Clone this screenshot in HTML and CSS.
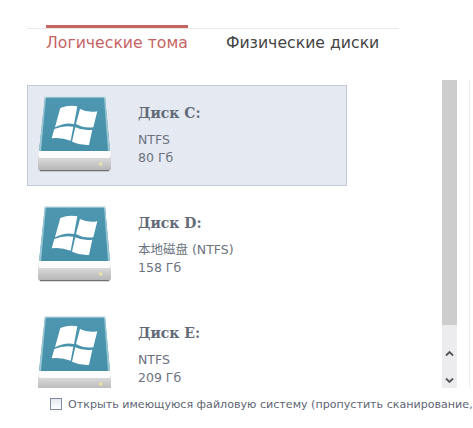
FILE: index.html
```html
<!DOCTYPE html>
<html lang="ru">
<head>
  <meta charset="UTF-8">
  <title>Диски</title>
  <link rel="stylesheet" href="styles.css">
</head>

<body>
  <svg class="defs" width="0" height="0">
    <defs>
      <linearGradient id="body-grad" x1="0" y1="0" x2="0" y2="1">
        <stop offset="0" stop-color="#4f97b1"/>
        <stop offset="1" stop-color="#4690aa"/>
      </linearGradient>
      <linearGradient id="base-grad" x1="0" y1="0" x2="0" y2="1">
        <stop offset="0" stop-color="#ededed"/>
        <stop offset="1" stop-color="#b4b4b4"/>
      </linearGradient>
      <symbol id="drive" viewBox="0 0 73 76">
        <path d="M7 0H67L72 55H1Z" fill="url(#body-grad)"/>
        <path d="M7 0L1 55H3L8 1ZM67 0L72 55H70L66 1Z" fill="#9cc8d6"/>
        <path d="M7 0H67L67.500 1.500H6.800Z" fill="#d5e6ec"/>
        <path d="M22.300 12Q31 8.500 39.300 10.300L36 28Q27 26 17 31.300Z" fill="#fff"/>
        <path d="M42 13Q50 17 59.300 15.300L55.300 31.300Q46 32.500 38 28Z" fill="#fff"/>
        <path d="M16.300 33Q26 29 35.300 30.700L32.700 44.700Q23 41 13.700 42.300Z" fill="#fff"/>
        <path d="M37.300 31.300Q45 35 54.300 33.700L51 49Q42 49.500 34 45.700Z" fill="#fff"/>
        <path d="M1 55H72L73 63V72Q73 75 70 75H3Q0 75 0 72V63Z" fill="url(#base-grad)"/>
        <path d="M1 55H72L72.500 60Q72.500 62 70 62H3Q0.500 62 0.500 60Z" fill="#fcfcfc"/>
        <path d="M2 74.700H71" stroke="#6f6f6f" stroke-width="1.200"/>
        <circle cx="62.700" cy="68" r="1.700" fill="#efe3a0"/>
      </symbol>
    </defs>
  </svg>

  <div class="tabs">
    <div class="tab active">Логические тома</div>
    <div class="tab">Физические диски</div>
  </div>

  <div class="content">
    <div class="disk-list">
      <div class="disk selected">
        <svg class="drive-icon"><use href="#drive"/></svg>
        <div class="disk-info">
          <div class="disk-name">Диск C:</div>
          <div class="disk-meta">NTFS</div>
          <div class="disk-meta">80 Гб</div>
        </div>
      </div>
      <div class="disk">
        <svg class="drive-icon"><use href="#drive"/></svg>
        <div class="disk-info">
          <div class="disk-name">Диск D:</div>
          <div class="disk-meta">本地磁盘 (NTFS)</div>
          <div class="disk-meta">158 Гб</div>
        </div>
      </div>
      <div class="disk">
        <svg class="drive-icon"><use href="#drive"/></svg>
        <div class="disk-info">
          <div class="disk-name">Диск E:</div>
          <div class="disk-meta">NTFS</div>
          <div class="disk-meta">209 Гб</div>
        </div>
      </div>
    </div>

    <div class="scrollbar">
      <div class="thumb"></div>
      <svg class="arrow" width="9" height="7" viewBox="0 0 9 7"><path d="M1 5.500L4.500 2L8 5.500" fill="none" stroke="#555" stroke-width="1.800"/></svg>
      <svg class="arrow" width="9" height="7" viewBox="0 0 9 7"><path d="M1 1.500L4.500 5L8 1.500" fill="none" stroke="#555" stroke-width="1.800"/></svg>
    </div>
    <div class="edge"></div>
  </div>

  <label class="open-fs">
    <span class="checkbox"></span>
    <span class="open-fs-text">Открыть имеющуюся файловую систему (пропустить сканирование,</span>
  </label>
</body>
</html>
```

FILE: styles.css
```css
html, body {
  height: 100%;
}

body {
  margin: 0;
  background: white;
  color: #6b7280;
  font-family: "DejaVu Sans", Tahoma, sans-serif;
  overflow: hidden;
}

.defs {
  display: block;
  height: 0;
}

.tabs {
  display: flex;
  gap: 38px;
  width: 353px;
  height: 29px;
  margin: 28px 0 0 27px;
  padding-left: 19px;
  border-top: 1px solid #e8e8e8;
}

.tab {
  margin-top: -4px;
  padding-top: 6px;
  border-top: 3px solid transparent;
  font-size: 15.7px;
  line-height: 18px;
  color: #444;
  white-space: nowrap;
}

.tab.active {
  border-top-color: #c66464;
  color: #c66464;
}

.content {
  display: flex;
  height: 308px;
  margin-top: 22px;
}

.disk-list {
  width: 415px;
  padding: 5px 0 0 27px;
  overflow: hidden;
}

.disk {
  display: flex;
  box-sizing: border-box;
  width: 320px;
  height: 101px;
  margin-bottom: 9px;
  padding: 10px 0 0 10px;
  border: 1px solid transparent;
}

.disk.selected {
  background: #e5e9f1;
  border-color: #c3cad6;
}

.drive-icon {
  flex: none;
  width: 73px;
  height: 76px;
}

.disk-info {
  margin-left: 27px;
  padding-top: 7px;
}

.disk-name {
  margin-bottom: 8px;
  font-family: "DejaVu Serif", serif;
  font-size: 14px;
  font-weight: bold;
  line-height: 20px;
  color: #636a78;
}

.disk-meta {
  font-family: "DejaVu Sans", "Noto Sans CJK SC", sans-serif;
  font-size: 12.5px;
  line-height: 18px;
}

.scrollbar {
  display: flex;
  flex-direction: column;
  align-items: center;
  width: 15px;
  background: #ececee;
}

.thumb {
  flex: none;
  align-self: stretch;
  height: 245px;
  margin-bottom: 25px;
  background: #cdcdcd;
}

.arrow {
  flex: none;
  margin-bottom: 20px;
}

.arrow:last-child {
  margin-bottom: 0;
}

.edge {
  width: 1px;
  margin-left: 12px;
  background: #ececec;
}

.open-fs {
  display: flex;
  align-items: center;
  gap: 6px;
  margin: 6px 0 0 50px;
  height: 20px;
  white-space: nowrap;
}

.checkbox {
  flex: none;
  box-sizing: border-box;
  width: 12px;
  height: 12px;
  border: 1px solid #7f8ea3;
  background: linear-gradient(#e4e8ee, #fff);
}

.open-fs-text {
  font-size: 11.1px;
  color: #5e6573;
}
```
